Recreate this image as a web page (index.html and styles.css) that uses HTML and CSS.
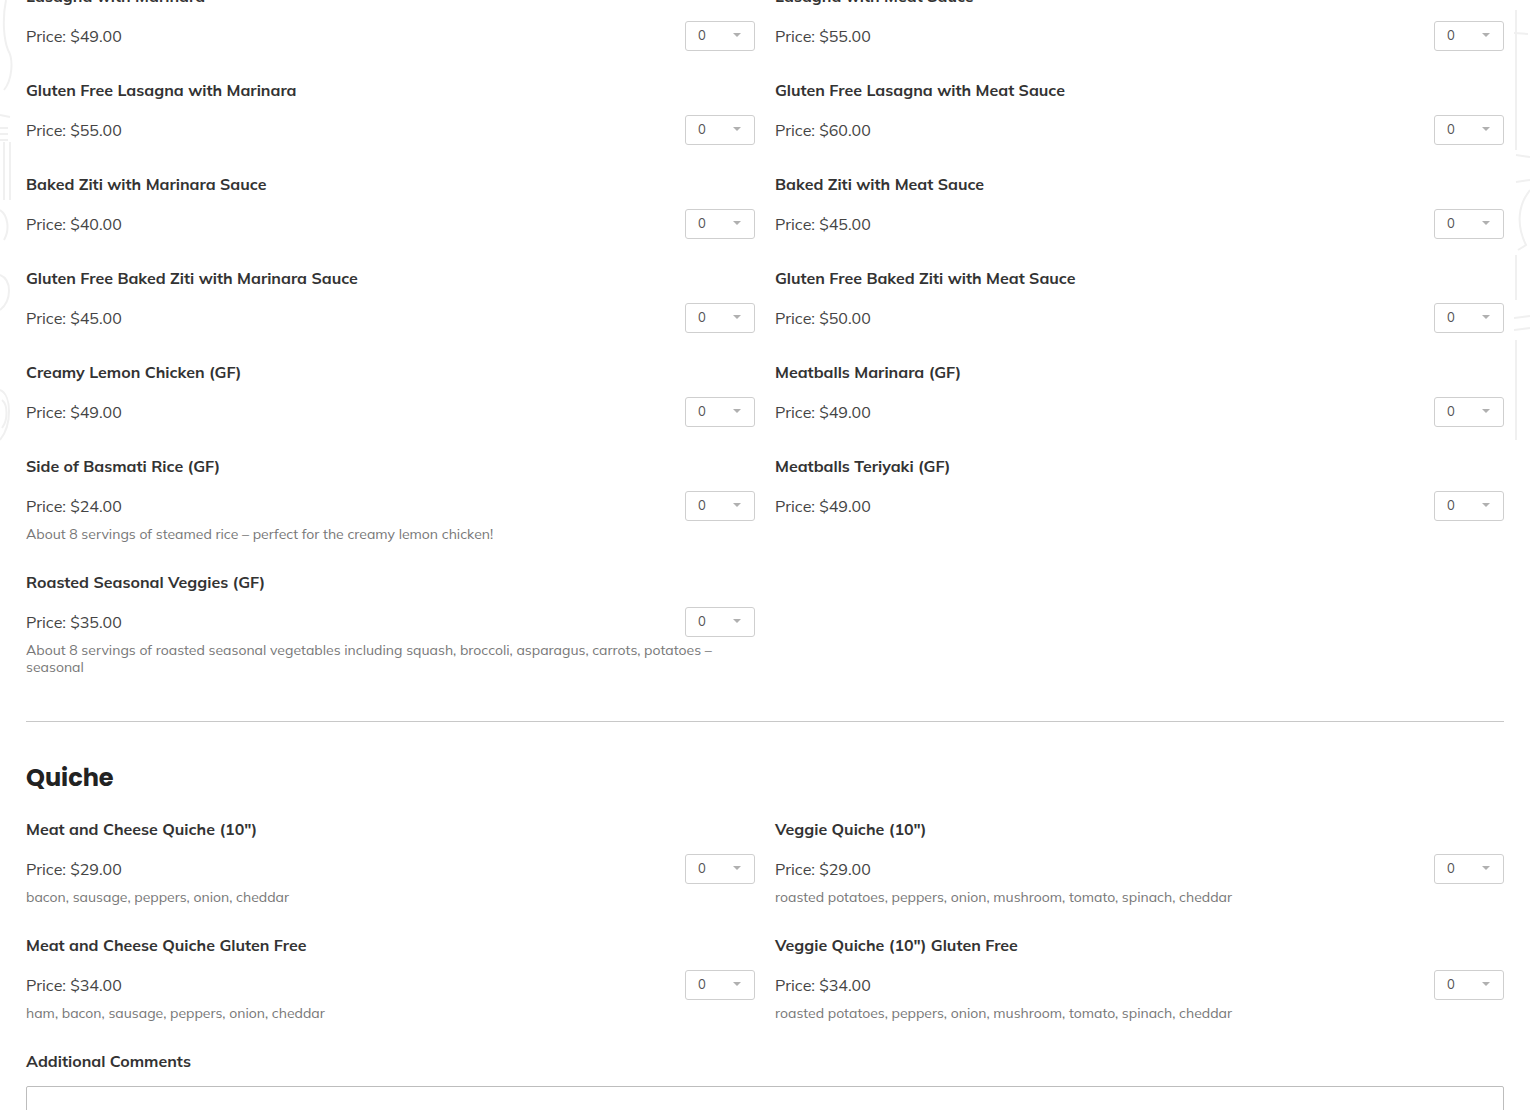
FILE: index.html
```html
<!DOCTYPE html>
<html lang="en">
<head>
<meta charset="utf-8">
<title>Order Form</title>
<link rel="stylesheet" href="styles.css">
</head>
<body>
<svg class="deco deco-left" width="24" height="450" viewBox="0 0 24 450" aria-hidden="true">
  <path d="M6 0 C 2 20, 4 40, 8 50 C 14 60, 12 80, 4 90" />
  <path d="M0 115 L 10 117" />
  <path d="M0 128 L 8 128 M0 134 L 8 134 M0 140 L 8 140" />
  <path d="M4 142 L 4 200 M10 142 L 10 200" />
  <path d="M0 210 C 8 215, 10 230, 4 240" />
  <path d="M0 275 C 12 280, 12 300, 0 310" />
  <path d="M0 390 C 12 395, 12 425, 0 440" />
  <path d="M2 400 C 8 405, 8 420, 2 428" />
</svg>
<svg class="deco deco-right" width="16" height="450" viewBox="0 0 16 450" aria-hidden="true">
  <path d="M2 10 L 2 150" />
  <path d="M0 33 L 14 34" />
  <path d="M2 155 L 16 157" />
  <path d="M2 182 L 16 180" />
  <path d="M16 190 C 4 205, 2 225, 12 245 L 4 250" />
  <path d="M2 255 L 2 300" />
  <path d="M0 318 L 16 316 M0 330 L 16 328" />
  <path d="M2 340 L 2 440" />
</svg>

<main class="page">
  <section class="menu-grid menu-grid--top">
    <div class="item">
      <div class="item-title">Lasagna with Marinara</div>
      <div class="price-row"><span class="price">Price: $49.00</span><span class="qty"><span>0</span><i class="caret"></i></span></div>
    </div>
    <div class="item">
      <div class="item-title">Lasagna with Meat Sauce</div>
      <div class="price-row"><span class="price">Price: $55.00</span><span class="qty"><span>0</span><i class="caret"></i></span></div>
    </div>
    <div class="item">
      <div class="item-title">Gluten Free Lasagna with Marinara</div>
      <div class="price-row"><span class="price">Price: $55.00</span><span class="qty"><span>0</span><i class="caret"></i></span></div>
    </div>
    <div class="item">
      <div class="item-title">Gluten Free Lasagna with Meat Sauce</div>
      <div class="price-row"><span class="price">Price: $60.00</span><span class="qty"><span>0</span><i class="caret"></i></span></div>
    </div>
    <div class="item">
      <div class="item-title">Baked Ziti with Marinara Sauce</div>
      <div class="price-row"><span class="price">Price: $40.00</span><span class="qty"><span>0</span><i class="caret"></i></span></div>
    </div>
    <div class="item">
      <div class="item-title">Baked Ziti with Meat Sauce</div>
      <div class="price-row"><span class="price">Price: $45.00</span><span class="qty"><span>0</span><i class="caret"></i></span></div>
    </div>
    <div class="item">
      <div class="item-title">Gluten Free Baked Ziti with Marinara Sauce</div>
      <div class="price-row"><span class="price">Price: $45.00</span><span class="qty"><span>0</span><i class="caret"></i></span></div>
    </div>
    <div class="item">
      <div class="item-title">Gluten Free Baked Ziti with Meat Sauce</div>
      <div class="price-row"><span class="price">Price: $50.00</span><span class="qty"><span>0</span><i class="caret"></i></span></div>
    </div>
    <div class="item">
      <div class="item-title">Creamy Lemon Chicken (GF)</div>
      <div class="price-row"><span class="price">Price: $49.00</span><span class="qty"><span>0</span><i class="caret"></i></span></div>
    </div>
    <div class="item">
      <div class="item-title">Meatballs Marinara (GF)</div>
      <div class="price-row"><span class="price">Price: $49.00</span><span class="qty"><span>0</span><i class="caret"></i></span></div>
    </div>
    <div class="item">
      <div class="item-title">Side of Basmati Rice (GF)</div>
      <div class="price-row"><span class="price">Price: $24.00</span><span class="qty"><span>0</span><i class="caret"></i></span></div>
      <p class="item-desc">About 8 servings of steamed rice – perfect for the creamy lemon chicken!</p>
    </div>
    <div class="item">
      <div class="item-title">Meatballs Teriyaki (GF)</div>
      <div class="price-row"><span class="price">Price: $49.00</span><span class="qty"><span>0</span><i class="caret"></i></span></div>
    </div>
    <div class="item">
      <div class="item-title">Roasted Seasonal Veggies (GF)</div>
      <div class="price-row"><span class="price">Price: $35.00</span><span class="qty"><span>0</span><i class="caret"></i></span></div>
      <p class="item-desc">About 8 servings of roasted seasonal vegetables including squash, broccoli, asparagus, carrots, potatoes – seasonal</p>
    </div>
  </section>

  <hr class="divider">

  <h2 class="section-title">Quiche</h2>

  <section class="menu-grid">
    <div class="item">
      <div class="item-title">Meat and Cheese Quiche (10")</div>
      <div class="price-row"><span class="price">Price: $29.00</span><span class="qty"><span>0</span><i class="caret"></i></span></div>
      <p class="item-desc">bacon, sausage, peppers, onion, cheddar</p>
    </div>
    <div class="item">
      <div class="item-title">Veggie Quiche (10")</div>
      <div class="price-row"><span class="price">Price: $29.00</span><span class="qty"><span>0</span><i class="caret"></i></span></div>
      <p class="item-desc">roasted potatoes, peppers, onion, mushroom, tomato, spinach, cheddar</p>
    </div>
    <div class="item">
      <div class="item-title">Meat and Cheese Quiche Gluten Free</div>
      <div class="price-row"><span class="price">Price: $34.00</span><span class="qty"><span>0</span><i class="caret"></i></span></div>
      <p class="item-desc">ham, bacon, sausage, peppers, onion, cheddar</p>
    </div>
    <div class="item">
      <div class="item-title">Veggie Quiche (10") Gluten Free</div>
      <div class="price-row"><span class="price">Price: $34.00</span><span class="qty"><span>0</span><i class="caret"></i></span></div>
      <p class="item-desc">roasted potatoes, peppers, onion, mushroom, tomato, spinach, cheddar</p>
    </div>
  </section>

  <div class="comments">
    <label class="item-title comments-label" for="comments">Additional Comments</label>
    <textarea id="comments" class="comments-box"></textarea>
  </div>
</main>
</body>
</html>
```

FILE: styles.css
```css
* { box-sizing: border-box; }

html, body {
  margin: 0;
  padding: 0;
  background: #fff;
}

body {
  font-family: "Mulish", "Muli", "Lato", "Noto Sans", sans-serif;
  color: #444;
  overflow: hidden;
}

.deco {
  position: absolute;
  top: 0;
  fill: none;
  stroke: #f0f0f0;
  stroke-width: 2;
}
.deco-left { left: 0; }
.deco-right { right: 0; }

.page {
  position: relative;
  padding: 0 26px;
}

.menu-grid {
  display: grid;
  grid-template-columns: 1fr 1fr;
  column-gap: 20px;
}

.menu-grid--top {
  margin-top: -14px;
}

.item {
  margin-bottom: 29px;
}

.item-title {
  display: block;
  font-weight: 700;
  font-size: 16px;
  line-height: 20px;
  color: #333;
  margin-bottom: 15px;
}

.price-row {
  display: flex;
  align-items: center;
  justify-content: space-between;
  height: 30px;
}

.price {
  font-size: 16px;
  color: #444;
}

.qty {
  width: 70px;
  height: 30px;
  border: 1px solid #cfcfcf;
  border-radius: 3px;
  display: flex;
  align-items: center;
  justify-content: space-between;
  padding: 0 13px 2px 12px;
  font-size: 13px;
  color: #555;
}

.caret {
  width: 0;
  height: 0;
  border-left: 4px solid transparent;
  border-right: 4px solid transparent;
  border-top: 4px solid #b0b0b0;
}

.item-desc {
  margin: 5px 0 0;
  font-size: 14px;
  line-height: 17px;
  color: #777;
}

.divider {
  margin: 16px 0 0;
  border: 0;
  border-top: 1px solid #c8c8c8;
  height: 0;
}

.section-title {
  margin: 38px 0 23px;
  font-family: "Poppins", "Inter", sans-serif;
  font-weight: 700;
  font-size: 24px;
  line-height: 36px;
  color: #222;
}

.comments-label {
  margin-bottom: 15px;
}

.comments-box {
  display: block;
  width: 100%;
  height: 120px;
  border: 1px solid #bdbdbd;
  border-radius: 2px;
  resize: none;
}
```
